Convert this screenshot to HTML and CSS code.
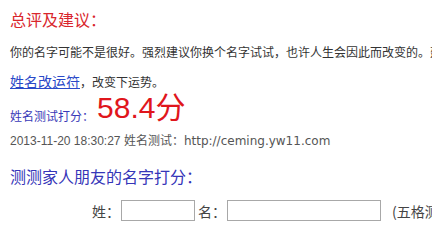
FILE: index.html
```html
<!DOCTYPE html>
<html lang="zh-CN">
<head>
<meta charset="utf-8">
<title>姓名测试打分</title>
<link rel="stylesheet" href="styles.css">
</head>
<body>
<div class="page">
  <h2 class="title">总评及建议：</h2>
  <p class="advice">你的名字可能不是很好。强烈建议你换个名字试试，也许人生会因此而改变的。建议使用</p>
  <p class="fix"><a href="#" class="fix-link">姓名改运符</a>，改变下运势。</p>
  <div class="score-line"><span class="score-label">姓名测试打分：</span><span class="score">58.4分</span></div>
  <p class="meta"><span class="date">2013-11-20 18:30:27 </span>姓名测试：<span class="url">http://ceming.yw11.com</span></p>
  <h3 class="subtitle">测测家人朋友的名字打分：</h3>
  <form class="name-form">
    <label class="field-label">姓：</label><input class="box box-xing" type="text">
    <label class="field-label field-ming">名：</label><input class="box box-ming" type="text">
    <span class="note">(五格测试)</span>
  </form>
</div>
</body>
</html>
```

FILE: styles.css
```css
html, body {
  margin: 0;
  padding: 0;
  background: #ffffff;
  overflow: hidden;
}
body {
  width: 432px;
  height: 225px;
  font-family: "Noto Sans CJK SC", "Liberation Sans", sans-serif;
  color: #333333;
}
.page {
  padding: 0 0 0 10px;
  width: 900px;
}
.title {
  margin: 9px 0 0 0;
  font-size: 16px;
  line-height: 20px;
  height: 20px;
  font-weight: normal;
  color: #d9262c;
}
.advice {
  margin: 13px 0 0 0;
  font-size: 12px;
  line-height: 20px;
  height: 20px;
  white-space: nowrap;
  color: #333333;
}
.fix {
  margin: 9px 0 0 0;
  font-size: 12px;
  line-height: 20px;
  height: 20px;
  color: #333333;
}
.fix-link {
  font-size: 14px;
  color: #2a49c8;
  text-decoration: underline;
}
.score-line {
  margin: 0;
  padding-top: 0;
  height: 32px;
  line-height: 34px;
  white-space: nowrap;
}
.score-label {
  font-size: 12px;
  color: #3a3ab8;
  vertical-align: -3px;
}
.score {
  font-family: "Liberation Sans", "Noto Sans CJK SC", sans-serif;
  font-size: 30px;
  color: #e0161c;
  margin-left: 3px;
}
.meta {
  margin: 9px 0 0 0;
  font-size: 12px;
  line-height: 16px;
  height: 16px;
  color: #555555;
  white-space: nowrap;
}
.date {
  font-family: "Liberation Sans", sans-serif;
}
.url {
  font-family: "DejaVu Sans", sans-serif;
}
.subtitle {
  margin: 18px 0 0 0;
  font-size: 16px;
  line-height: 20px;
  height: 20px;
  font-weight: normal;
  color: #3535b8;
}
.name-form {
  margin: 14px 0 0 0;
  padding-left: 82px;
  display: flex;
  align-items: center;
  height: 21px;
  font-size: 14px;
  color: #444444;
  white-space: nowrap;
}
.field-label {
  width: 29px;
}
.field-ming {
  margin-left: 3px;
}
.box {
  box-sizing: border-box;
  height: 21px;
  margin: 0;
  padding: 0 2px;
  border: 1px solid #a8a8a8;
  background: #ffffff;
}
.box-xing {
  width: 74px;
}
.box-ming {
  width: 154px;
}
.note {
  margin-left: 11px;
}
```
